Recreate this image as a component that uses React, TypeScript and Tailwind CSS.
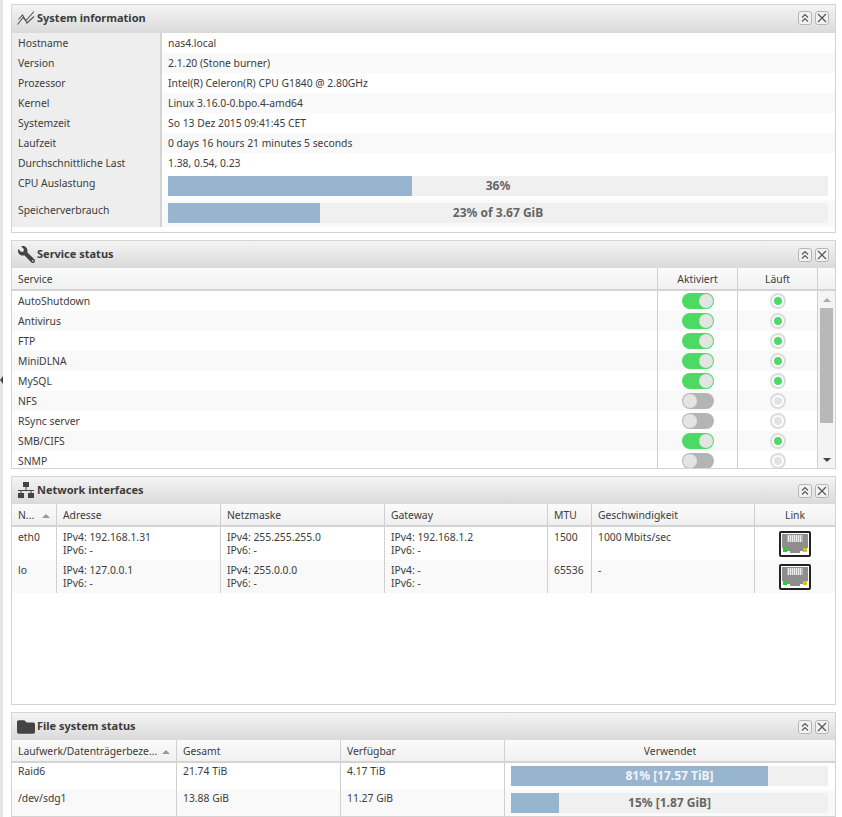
import React from "react";
import { FaWrench, FaFolder } from "react-icons/fa";

function ChartIcon() {
  return (
    <svg width="18" height="16" viewBox="0 0 18 16" fill="none" stroke="#555" strokeWidth="1.1">
      <path d="M0.5 14.5 L6 7.5 L9 10.5 L17 1.5" />
      <path d="M1.5 9.5 L5.5 5 L10 13 L17 6.5" />
    </svg>
  );
}

function NetIcon() {
  return (
    <svg width="18" height="17" viewBox="0 0 18 17" fill="#444">
      <rect x="6" y="0" width="6" height="5" />
      <rect x="8.5" y="5" width="1" height="3" />
      <rect x="1" y="8" width="16" height="1" />
      <rect x="3.5" y="8" width="1" height="3" />
      <rect x="13.5" y="8" width="1" height="3" />
      <rect x="1" y="11" width="6" height="5" />
      <rect x="11" y="11" width="6" height="5" />
    </svg>
  );
}

function PanelButtons() {
  return (
    <div className="flex gap-[3px]">
      <div className="w-[14px] h-[14px] border border-[#b5b5b5] rounded-[3px] bg-[#f2f2f2] flex items-center justify-center">
        <svg width="10" height="10" viewBox="0 0 10 10" fill="none" stroke="#555" strokeWidth="1.1">
          <path d="M2 4.5 L5 1.5 L8 4.5" />
          <path d="M2 8.5 L5 5.5 L8 8.5" />
        </svg>
      </div>
      <div className="w-[14px] h-[14px] border border-[#b5b5b5] rounded-[3px] bg-[#f2f2f2] flex items-center justify-center">
        <svg width="10" height="10" viewBox="0 0 10 10" fill="none" stroke="#555" strokeWidth="1.2">
          <path d="M1 1 L9 9 M9 1 L1 9" />
        </svg>
      </div>
    </div>
  );
}

function Panel({ icon, title, className, headH, children }: { icon: React.ReactNode; title: string; className: string; headH: string; children: React.ReactNode }) {
  return (
    <section className={`border border-[#d4d4d4] bg-white flex flex-col shrink-0 overflow-hidden ${className}`}>
      <header className={`${headH} shrink-0 flex items-center pl-[4px] pr-[6px] bg-gradient-to-b from-[#f4f4f4] to-[#dadada]`}>
        <div className="w-[20px] flex justify-center text-[#444]">{icon}</div>
        <h2 className="ml-[1px] font-bold text-[11px] text-[#3c3c3c] flex-1">{title}</h2>
        <PanelButtons />
      </header>
      {children}
    </section>
  );
}

function Bar({ pct, label, light }: { pct: number; label: string; light?: boolean }) {
  return (
    <div className="relative h-[20px] bg-[#f0f0f0] w-full">
      <div className="h-full bg-[#97b5cf]" style={{ width: `${pct}%` }} />
      <div className={`absolute inset-0 flex items-center justify-center font-bold text-[12px] ${light ? "text-[#f4f4f4]" : "text-[#666]"}`}>{label}</div>
    </div>
  );
}

const sysRows = [
  ["Hostname", "nas4.local"],
  ["Version", "2.1.20 (Stone burner)"],
  ["Prozessor", "Intel(R) Celeron(R) CPU G1840 @ 2.80GHz"],
  ["Kernel", "Linux 3.16.0-0.bpo.4-amd64"],
  ["Systemzeit", "So 13 Dez 2015 09:41:45 CET"],
  ["Laufzeit", "0 days 16 hours 21 minutes 5 seconds"],
  ["Durchschnittliche Last", "1.38, 0.54, 0.23"],
];

function SystemPanel() {
  return (
    <Panel icon={<ChartIcon />} title="System information" className="h-[229px]" headH="h-[28px] pb-[2px]">
      <div className="grid grid-cols-[150px_1fr]">
        {sysRows.map(([k, v], i) => (
          <div key={k} className="contents">
            <div className="h-[20px] bg-[#eeeeee] border-r-2 border-[#d4d4d4] pl-[6px] pt-[2px] flex items-center">{k}</div>
            <div className={`h-[20px] pl-[6px] pt-[2px] flex items-center ${i % 2 ? "bg-[#f9f9f9]" : "bg-white"}`}>{v}</div>
          </div>
        ))}
        <div className="h-[27px] bg-[#eeeeee] border-r-2 border-[#d4d4d4] pl-[6px] pt-[3px]">CPU Auslastung</div>
        <div className="h-[27px] pl-[6px] pr-[7px] pt-[3px]"><Bar pct={37} label="36%" /></div>
        <div className="h-[27px] bg-[#eeeeee] border-r-2 border-[#d4d4d4] pl-[6px] pt-[3px]">Speicherverbrauch</div>
        <div className="h-[27px] pl-[6px] pr-[7px] pt-[3px] bg-[#f9f9f9]"><Bar pct={23} label="23% of 3.67 GiB" /></div>
      </div>
    </Panel>
  );
}

function Sort() {
  return <span className="w-0 h-0 border-x-[4px] border-x-transparent border-b-[4px] border-b-[#999] inline-block shrink-0" />;
}

function HeadCell({ children, center, width, sort, last }: { children?: React.ReactNode; center?: boolean; width: string; sort?: boolean; last?: boolean }) {
  return (
    <div className={`${width} shrink-0 h-full flex items-center px-[6px] pt-[2px] ${center ? "justify-center" : "justify-between"} ${last ? "" : "border-r border-[#d0d0d0]"}`}>
      <span className="truncate">{children}</span>
      {sort ? <Sort /> : null}
    </div>
  );
}

function Head({ children }: { children: React.ReactNode }) {
  return <div className="h-[23px] shrink-0 flex bg-gradient-to-b from-[#fbfbfb] to-[#f0f0f0] border-b-2 border-[#d4d4d4]">{children}</div>;
}

function Toggle({ on }: { on: boolean }) {
  return (
    <div className={`w-[32px] h-[16px] rounded-full p-[1px] flex ${on ? "bg-[#4cd964] justify-end" : "bg-[#b4b4b4] justify-start"}`}>
      <div className="w-[14px] h-[14px] rounded-full bg-[#e4e4e4]" />
    </div>
  );
}

function Dot({ on }: { on: boolean }) {
  return (
    <div className="w-[16px] h-[16px] rounded-full border-2 border-[#dcdcdc] bg-white flex items-center justify-center">
      <div className={`w-[8px] h-[8px] rounded-full ${on ? "bg-[#4cd964]" : "bg-[#e2e2e2]"}`} />
    </div>
  );
}

const services: [string, boolean][] = [
  ["AutoShutdown", true],
  ["Antivirus", true],
  ["FTP", true],
  ["MiniDLNA", true],
  ["MySQL", true],
  ["NFS", false],
  ["RSync server", false],
  ["SMB/CIFS", true],
  ["SNMP", false],
];

function ServicePanel() {
  return (
    <Panel icon={<FaWrench size={17} className="-scale-x-100" />} title="Service status" className="h-[229px]" headH="h-[27px]">
      <Head>
        <HeadCell width="w-[646px]">Service</HeadCell>
        <HeadCell width="w-[80px]" center>Aktiviert</HeadCell>
        <HeadCell width="w-[80px]" center>Läuft</HeadCell>
      </Head>
      <div className="flex flex-1 min-h-0">
        <div className="w-[806px] overflow-hidden">
          {services.map(([name, on], i) => (
            <div key={name} className={`h-[20px] flex ${i % 2 ? "bg-[#f9f9f9]" : "bg-white"}`}>
              <div className="w-[646px] pl-[6px] pt-[2px] flex items-center border-r border-[#d0d0d0]">{name}</div>
              <div className="w-[80px] flex items-center justify-center border-r border-[#d0d0d0]"><Toggle on={on} /></div>
              <div className="w-[80px] flex items-center justify-center border-r border-[#d0d0d0]"><Dot on={on} /></div>
            </div>
          ))}
        </div>
        <div className="flex-1 bg-[#f4f4f4] flex flex-col items-center">
          <div className="h-[17px] flex items-center justify-center"><span className="w-0 h-0 border-x-[4px] border-x-transparent border-b-[4px] border-b-[#aaa]" /></div>
          <div className="w-[13px] h-[115px] bg-[#b8b8b8]" />
          <div className="flex-1" />
          <div className="h-[17px] flex items-center justify-center"><span className="w-0 h-0 border-x-[4px] border-x-transparent border-t-[4px] border-t-[#444]" /></div>
        </div>
      </div>
    </Panel>
  );
}

function Port() {
  return (
    <div className="w-[32px] h-[26px] border-2 border-[#222] rounded-[2px] bg-white p-[1px]">
      <svg width="26" height="20" viewBox="0 0 26 20" className="block">
        <path d="M0 0 H26 V14 H21 V17 H18 V19 H8 V17 H5 V14 H0 Z" fill="#8e8e8e" />
        <rect x="5" y="1" width="16" height="7" fill="#b4b4b4" />
        <path d="M6.5 1 V8 M8.5 1 V8 M10.5 1 V8 M12.5 1 V8 M14.5 1 V8 M16.5 1 V8 M18.5 1 V8" stroke="#ececec" strokeWidth="1" />
        <rect x="1" y="14" width="4" height="4" fill="#2ecb2e" />
        <rect x="21" y="14" width="4" height="4" fill="#e8b820" />
      </svg>
    </div>
  );
}

const nets = [
  ["eth0", "192.168.1.31", "255.255.255.0", "192.168.1.2", "1500", "1000 Mbits/sec"],
  ["lo", "127.0.0.1", "255.0.0.0", "-", "65536", "-"],
];

function NetCell({ width, children }: { width: string; children: React.ReactNode }) {
  return <div className={`${width} shrink-0 pl-[6px] pt-[4px] leading-[13px] border-r border-[#d0d0d0]`}>{children}</div>;
}

function NetworkPanel() {
  return (
    <Panel icon={<NetIcon />} title="Network interfaces" className="h-[229px]" headH="h-[27px]">
      <Head>
        <HeadCell width="w-[45px]" sort>N...</HeadCell>
        <HeadCell width="w-[164px]">Adresse</HeadCell>
        <HeadCell width="w-[164px]">Netzmaske</HeadCell>
        <HeadCell width="w-[163px]">Gateway</HeadCell>
        <HeadCell width="w-[44px]">MTU</HeadCell>
        <HeadCell width="w-[163px]">Geschwindigkeit</HeadCell>
        <HeadCell width="w-[80px]" center last>Link</HeadCell>
      </Head>
      {nets.map((n, i) => (
        <div key={n[0]} className={`h-[33px] flex ${i % 2 ? "bg-[#f9f9f9]" : "bg-white"}`}>
          <NetCell width="w-[45px]">{n[0]}</NetCell>
          <NetCell width="w-[164px]">IPv4: {n[1]}<br />IPv6: -</NetCell>
          <NetCell width="w-[164px]">IPv4: {n[2]}<br />IPv6: -</NetCell>
          <NetCell width="w-[163px]">IPv4: {n[3]}<br />IPv6: -</NetCell>
          <NetCell width="w-[44px]">{n[4]}</NetCell>
          <NetCell width="w-[163px]">{n[5]}</NetCell>
          <div className="w-[80px] flex items-center justify-center"><Port /></div>
        </div>
      ))}
    </Panel>
  );
}

const fsRows = [
  ["Raid6", "21.74 TiB", "4.17 TiB", 81, "81% [17.57 TiB]", true],
  ["/dev/sdg1", "13.88 GiB", "11.27 GiB", 15, "15% [1.87 GiB]", false],
] as const;

function FilePanel() {
  return (
    <Panel icon={<FaFolder size={18} />} title="File system status" className="h-[105px]" headH="h-[27px]">
      <Head>
        <HeadCell width="w-[165px]" sort>Laufwerk/Datenträgerbeze...</HeadCell>
        <HeadCell width="w-[164px]">Gesamt</HeadCell>
        <HeadCell width="w-[164px]">Verfügbar</HeadCell>
        <HeadCell width="w-[330px]" center last>Verwendet</HeadCell>
      </Head>
      {fsRows.map((r, i) => (
        <div key={r[0]} className={`h-[27px] flex shrink-0 ${i % 2 ? "bg-[#f9f9f9]" : "bg-white"}`}>
          <div className="w-[165px] pl-[6px] pt-[1px] border-r border-[#d0d0d0]">{r[0]}</div>
          <div className="w-[164px] pl-[6px] pt-[1px] border-r border-[#d0d0d0]">{r[1]}</div>
          <div className="w-[164px] pl-[6px] pt-[1px] border-r border-[#d0d0d0]">{r[2]}</div>
          <div className="w-[330px] pl-[6px] pr-[7px] pt-[3px]"><Bar pct={r[3]} label={r[4]} light={r[5]} /></div>
        </div>
      ))}
    </Panel>
  );
}

export default function App() {
  return (
    <div className="h-[817px] w-[842px] overflow-hidden bg-white flex text-[10.35px] text-[#3c3c3c] font-['Noto_Sans',sans-serif]">
      <div className="w-[3px] bg-[#e4e4e4] shrink-0 relative">
        <span className="absolute left-0 top-[376px] w-0 h-0 border-y-[4px] border-y-transparent border-r-[3px] border-r-[#444]" />
      </div>
      <main className="ml-[8px] w-[825px] pt-[4px] flex flex-col gap-[7px]">
        <SystemPanel />
        <ServicePanel />
        <NetworkPanel />
        <FilePanel />
      </main>
    </div>
  );
}
